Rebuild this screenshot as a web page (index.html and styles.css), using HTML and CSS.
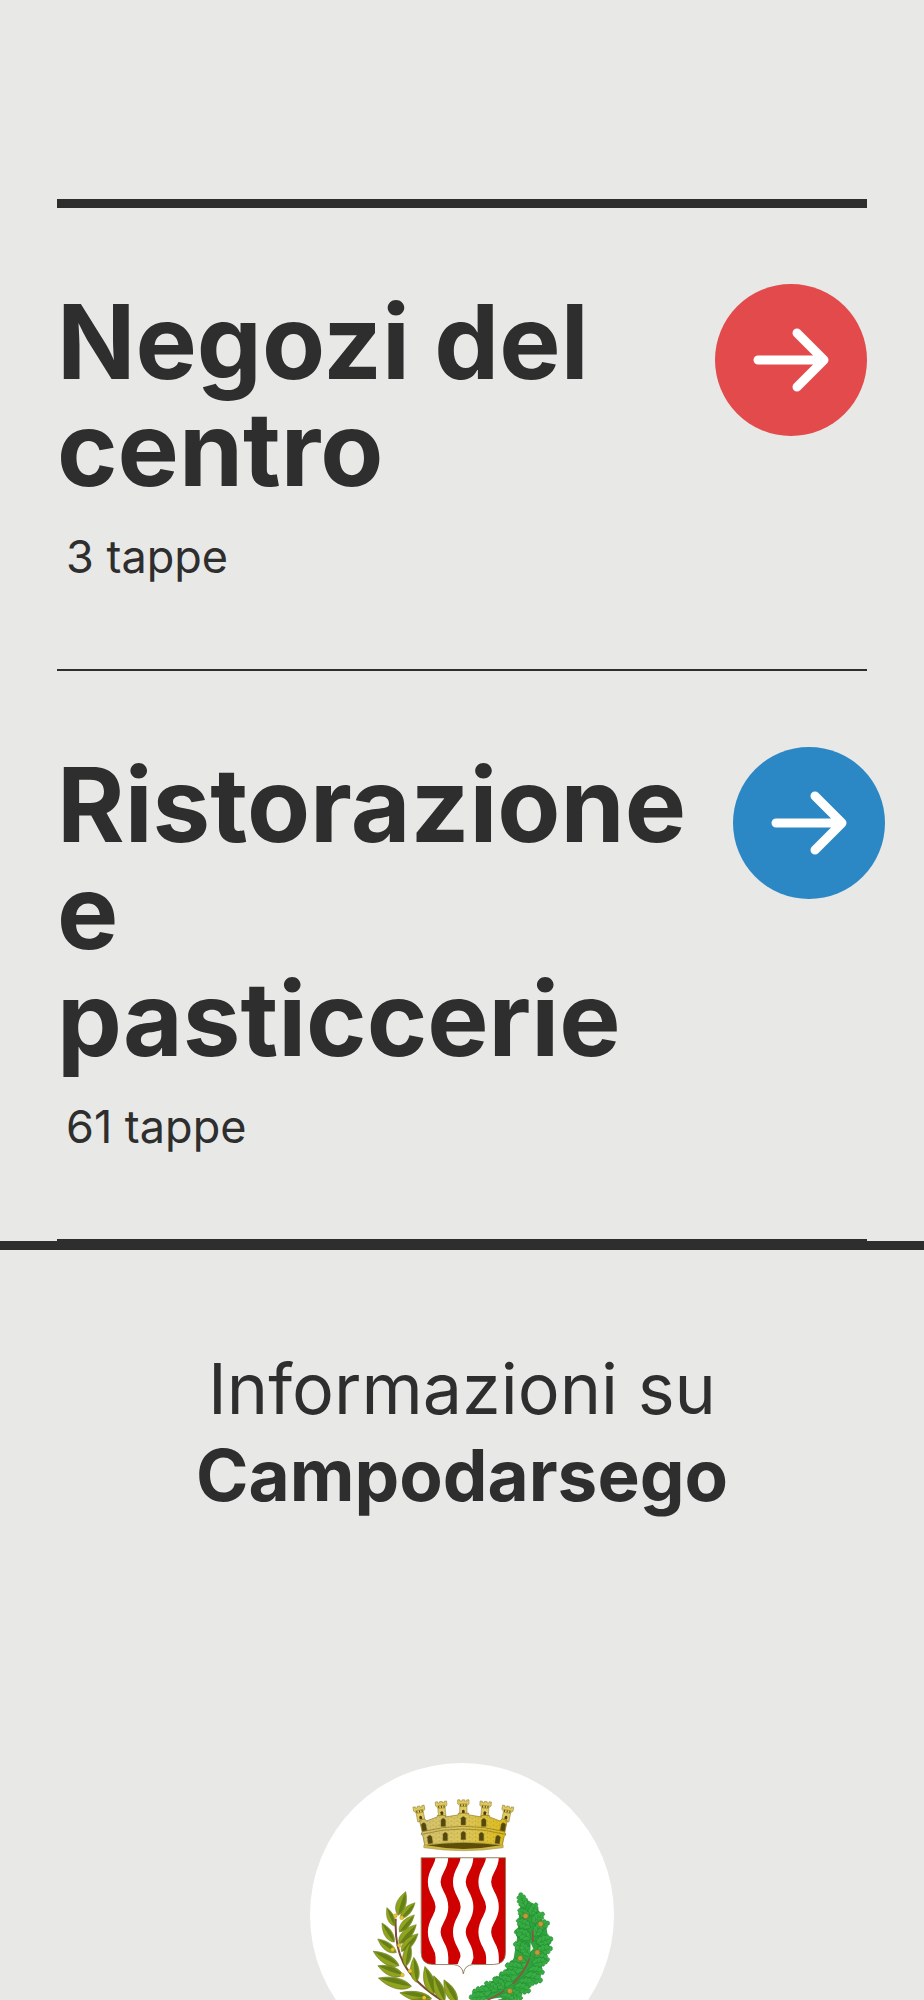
FILE: index.html
```
<!DOCTYPE html>
<html lang="it">
<head>
  <meta charset="UTF-8">
  <title>Campodarsego</title>
  <meta name="viewport" content="width=device-width, initial-scale=1">
  <link rel="stylesheet" href="styles.css">
</head>
<body>

  <main class="routes">
    <article class="route">
      <div class="route-text">
        <h2>Negozi del centro</h2>
        <p>3 tappe</p>
      </div>
      <a class="route-link red" href="#negozi" aria-label="Negozi del centro">
        <svg viewBox="0 0 152 152"><path d="M43 76H108M82 49L109 76L82 103"/></svg>
      </a>
    </article>

    <article class="route">
      <div class="route-text">
        <h2>Ristorazione e pasticcerie</h2>
        <p>61 tappe</p>
      </div>
      <a class="route-link blue" href="#ristorazione" aria-label="Ristorazione e pasticcerie">
        <svg viewBox="0 0 152 152"><path d="M43 76H108M82 49L109 76L82 103"/></svg>
      </a>
    </article>
  </main>

  <footer class="info">
    <h3>Informazioni su <strong>Campodarsego</strong></h3>

    <div class="crest">
      <svg viewBox="32 35 908 908" role="img" aria-label="Stemma di Campodarsego">
        <defs>
          <linearGradient id="gold" x1="0" x2="1">
            <stop offset="0" stop-color="#dccb7c"/>
            <stop offset="0.5" stop-color="#e6d163"/>
            <stop offset="1" stop-color="#eac40f"/>
          </linearGradient>
          <pattern id="bricks" width="18" height="12" patternUnits="userSpaceOnUse">
            <path d="M0 1H18M0 7H18M4 1V7M13 7V13" fill="none" stroke="#9c882f" stroke-width="1"/>
          </pattern>
          <clipPath id="shield">
            <path d="M364 318H616V600Q616 636 580 637H520Q493 638 490 665Q487 638 460 637H400Q364 636 364 600Z"/>
          </clipPath>
          <g id="tower">
            <path d="M-17 0H-10V4H-4V0H4V4H10V0H17V12L11 18V46H-11V18L-17 12Z" fill="#e0ca62" stroke="#8a7625" stroke-width="1.5"/>
            <path d="M-12 12H12M-10 20H10" stroke="#8a7625" stroke-width="1.5"/>
            <path d="M-8 13V19M0 13V19M8 13V19" stroke="#5a4a0c" stroke-width="3"/>
            <path d="M-4 40V32Q0 27 4 32V40Z" fill="#4b3f10"/>
          </g>
          <path id="door" d="M-7 14V-6Q0 -16 7 -6V14Z" fill="#54480f" stroke="#8a7620"/>
          <g id="olive">
            <path d="M0 0C14 -19 45 -23 80 0C48 17 18 16 0 0Z" fill="#92a31f" stroke="#5d700f" stroke-width="1.5"/>
            <path d="M2 0C25 -4 48 -4 76 0C48 14 22 12 2 0Z" fill="#648016"/>
          </g>
          <g id="oak">
            <path d="M0 0C4-8 5-8 10-11C13-18 18-16 20-12C24-19 30-17 31-11C37-16 42-11 41-5C47-5 50 0 47 4C46 9 41 8 39 6C38 14 31 15 29 10C26 17 19 16 18 11C13 15 8 11 8 6Z" fill="#38ad43" stroke="#1f8733" stroke-width="1.6"/>
            <path d="M3 0H40M14 0L20 -7M24 0L30 -7M17 1L22 7M28 1L32 6" fill="none" stroke="#218a35" stroke-width="1.4"/>
          </g>
        </defs>

        <!-- corona -->
        <use href="#tower" transform="translate(356 164) rotate(-11)"/>
        <use href="#tower" transform="translate(423 150) rotate(-5)"/>
        <use href="#tower" transform="translate(490 145)"/>
        <use href="#tower" transform="translate(557 150) rotate(5)"/>
        <use href="#tower" transform="translate(624 164) rotate(11)"/>
        <path d="M359 207L373 202L381 208L412 196V192H437V196L475 190V185H506V190L543 196V192H568V196L599 208L607 202L621 207L614 242L617 250L612 254L606 283Q490 300 375 283L369 252L364 248L367 240Z" fill="url(#gold)" stroke="#89731d" stroke-width="2"/>
        <path d="M359 207L373 202L381 208L412 196V192H437V196L475 190V185H506V190L543 196V192H568V196L599 208L607 202L621 207L606 283H375Z" fill="url(#bricks)"/>
        <path d="M367 240Q490 208 614 240M365 248Q490 216 616 248" fill="none" stroke="#8a7425" stroke-width="2"/>
        <use href="#door" transform="translate(372 224) rotate(-10)"/>
        <use href="#door" transform="translate(430 211)"/>
        <use href="#door" transform="translate(490 206)"/>
        <use href="#door" transform="translate(551 211)"/>
        <use href="#door" transform="translate(609 224) rotate(10)"/>
        <use href="#door" transform="translate(390 262) rotate(-8)"/>
        <use href="#door" transform="translate(436 253)"/>
        <use href="#door" transform="translate(490 250)"/>
        <use href="#door" transform="translate(544 253)"/>
        <use href="#door" transform="translate(593 262) rotate(8)"/>
        <path d="M372 280Q490 264 609 280V288Q490 306 372 288Z" fill="#cdb850" stroke="#a58c30" stroke-width="1.5"/>
        <path d="M380 281Q490 266 602 281Q490 302 380 281Z" fill="#5c4e08"/>

        <!-- scudo -->
        <g clip-path="url(#shield)">
          <rect x="360" y="314" width="260" height="322" fill="#cf0000"/>
          <g fill="none" stroke="#fff" stroke-width="38">
            <path d="M426 315C426 350 403 355 403 390S426 430 426 465S403 505 403 540S426 580 426 615V640"/>
            <path d="M501 315C501 350 478 355 478 390S501 430 501 465S478 505 478 540S501 580 501 615L490 645"/>
            <path d="M577 315C577 350 554 355 554 390S577 430 577 465S554 505 554 540S577 580 577 615V640"/>
          </g>
          <path d="M470 636H510L490 670Z" fill="#fff"/>
        </g>
        <path d="M364 318H616V600Q616 636 580 637H520Q493 638 490 665Q487 638 460 637H400Q364 636 364 600Z" fill="none" stroke="#85704a" stroke-width="2.5"/>

        <!-- ramo di ulivo -->
        <path d="M288 500C284 600 305 670 435 750Q500 790 560 850" fill="none" stroke="#7c4a35" stroke-width="6"/>
        <use href="#olive" transform="translate(295 490) rotate(-72) scale(.93 1)"/>
        <use href="#olive" transform="translate(303 500) rotate(-48) scale(.8)"/>
        <use href="#olive" transform="translate(285 522) rotate(-113) scale(.75)"/>
        <use href="#olive" transform="translate(299 540) rotate(-49) scale(.85)"/>
        <use href="#olive" transform="translate(284 570) rotate(-123) scale(.85)"/>
        <use href="#olive" transform="translate(298 575) rotate(-48) scale(.96 1)"/>
        <use href="#olive" transform="translate(290 601) rotate(-144) scale(.86)"/>
        <use href="#olive" transform="translate(305 598) rotate(-47) scale(.91)"/>
        <use href="#olive" transform="translate(298 640) rotate(-151) scale(1.1 1)"/>
        <use href="#olive" transform="translate(318 643) rotate(-80) scale(.9)"/>
        <use href="#olive" transform="translate(310 668) rotate(-160)"/>
        <use href="#olive" transform="translate(350 690) rotate(-96) scale(.94)"/>
        <use href="#olive" transform="translate(335 702) rotate(-166) scale(1.27 1.1)"/>
        <use href="#olive" transform="translate(402 725) rotate(-108) scale(1.08)"/>
        <use href="#olive" transform="translate(395 738) rotate(-170) scale(1.2 1)"/>
        <use href="#olive" transform="translate(434 747) rotate(-113) scale(1.04)"/>
        <use href="#olive" transform="translate(472 752) rotate(-120)"/>
        <use href="#olive" transform="translate(412 756) rotate(-172)"/>
        <use href="#olive" transform="translate(455 785) rotate(-190) scale(1.2 1)"/>
        <g fill="#e8c52f" stroke="#a98b12">
          <circle cx="287" cy="491" r="6"/><circle cx="306" cy="497" r="6"/>
          <circle cx="299" cy="580" r="6"/><circle cx="279" cy="592" r="6"/>
          <circle cx="331" cy="656" r="6"/><circle cx="308" cy="668" r="6"/>
          <circle cx="373" cy="736" r="6"/>
        </g>

        <!-- ramo di quercia -->
        <path d="M664 432L712 464L722 500L738 525L748 585L722 650L690 695L610 735L530 745L515 725L550 700L605 670L640 620L650 560L655 500Z" fill="#2fa33d"/>
        <use href="#oak" transform="translate(676 468) rotate(-112)"/>
        <use href="#oak" transform="translate(690 492) rotate(-65) scale(.9)"/>
        <use href="#oak" transform="translate(690 495) rotate(-150) scale(.9)"/>
        <use href="#oak" transform="translate(696 515) rotate(-45)"/>
        <use href="#oak" transform="translate(692 525) rotate(-155)"/>
        <use href="#oak" transform="translate(703 530) rotate(-25)"/>
        <use href="#oak" transform="translate(690 545) rotate(-175)"/>
        <use href="#oak" transform="translate(693 560) rotate(-150) scale(1.1)"/>
        <use href="#oak" transform="translate(703 555) rotate(-65)"/>
        <use href="#oak" transform="translate(704 565) rotate(5)"/>
        <use href="#oak" transform="translate(707 575) rotate(-20) scale(1.1)"/>
        <use href="#oak" transform="translate(693 590) rotate(-165) scale(1.15)"/>
        <use href="#oak" transform="translate(706 605) rotate(-22) scale(1.1)"/>
        <use href="#oak" transform="translate(700 615) rotate(8)"/>
        <use href="#oak" transform="translate(690 612) rotate(-125)"/>
        <use href="#oak" transform="translate(684 630) rotate(175) scale(1.15)"/>
        <use href="#oak" transform="translate(694 635) rotate(-10)"/>
        <use href="#oak" transform="translate(672 650) rotate(-170) scale(1.2)"/>
        <use href="#oak" transform="translate(682 655) rotate(5) scale(1.05)"/>
        <use href="#oak" transform="translate(655 668) rotate(180) scale(1.2)"/>
        <use href="#oak" transform="translate(670 672) rotate(12) scale(1.2)"/>
        <use href="#oak" transform="translate(640 690) rotate(-170) scale(1.2)"/>
        <use href="#oak" transform="translate(650 695) rotate(-5) scale(1.1)"/>
        <use href="#oak" transform="translate(640 702) rotate(15) scale(1.1)"/>
        <use href="#oak" transform="translate(615 708) rotate(-140)"/>
        <use href="#oak" transform="translate(595 715) rotate(-150)"/>
        <use href="#oak" transform="translate(625 715) rotate(30)"/>
        <use href="#oak" transform="translate(575 715) rotate(175) scale(1.2)"/>
        <use href="#oak" transform="translate(560 732) rotate(175) scale(1.1)"/>
        <use href="#oak" transform="translate(600 730) rotate(20)"/>
        <use href="#oak" transform="translate(590 745) rotate(35) scale(1.1)"/>
        <path d="M697 535L698 570M688 618Q670 665 638 695M612 715Q580 738 545 750Q490 780 430 850" fill="none" stroke="#8d5540" stroke-width="5"/>
        <path d="M691 572L699 590L690 599Z" fill="#eef5ea"/>
        <g fill="#c19a3c" stroke="#806020" stroke-width="1.5">
          <circle cx="676" cy="492" r="8"/><circle cx="721" cy="516" r="8"/>
          <circle cx="711" cy="601" r="8"/><circle cx="660" cy="618" r="8"/>
          <circle cx="629" cy="716" r="8"/>
        </g>
      </svg>
    </div>
  </footer>

</body>
</html>
```
FILE: styles.css
```
* { box-sizing: border-box; margin: 0; padding: 0; }

body {
  font-family: Inter, "Open Sans", sans-serif;
  background: #e8e8e6;
  color: #2e2e2e;
}

.routes {
  margin: 199px 57px 0;
  border-top: 9px solid #2e2e2e;
}

.route {
  display: flex;
  justify-content: space-between;
  align-items: flex-start;
  gap: 47px;
  padding: 76px 0 74px;
  border-bottom: 2px solid #2e2e2e;
}

.route-text h2 {
  padding-top: 4px;
  font-size: 103px;
  line-height: 107px;
  font-weight: 700;
}

.route-text p {
  padding: 16px 0 0 9px;
  font-size: 45px;
  line-height: 77px;
}

.route-link {
  flex: none;
  width: 152px;
  height: 152px;
  border-radius: 50%;
}
.route-link.red { background: #e24a4b; }
.route-link.blue { background: #2b88c5; }

.route-link svg {
  display: block;
  fill: none;
  stroke: #fff;
  stroke-width: 9;
  stroke-linecap: round;
  stroke-linejoin: round;
}

.info {
  padding: 96px 57px;
  border-top: 9px solid #2e2e2e;
  text-align: center;
}

.info h3 {
  font-size: 70px;
  line-height: 86px;
  font-weight: 400;
}
.info h3 strong {
  display: block;
  font-size: 71px;
  font-weight: 700;
}

.crest {
  width: 304px;
  height: 304px;
  margin: 245px auto 0;
  border-radius: 50%;
  background: #fff;
  overflow: hidden;
}
.crest svg { display: block; }
```
